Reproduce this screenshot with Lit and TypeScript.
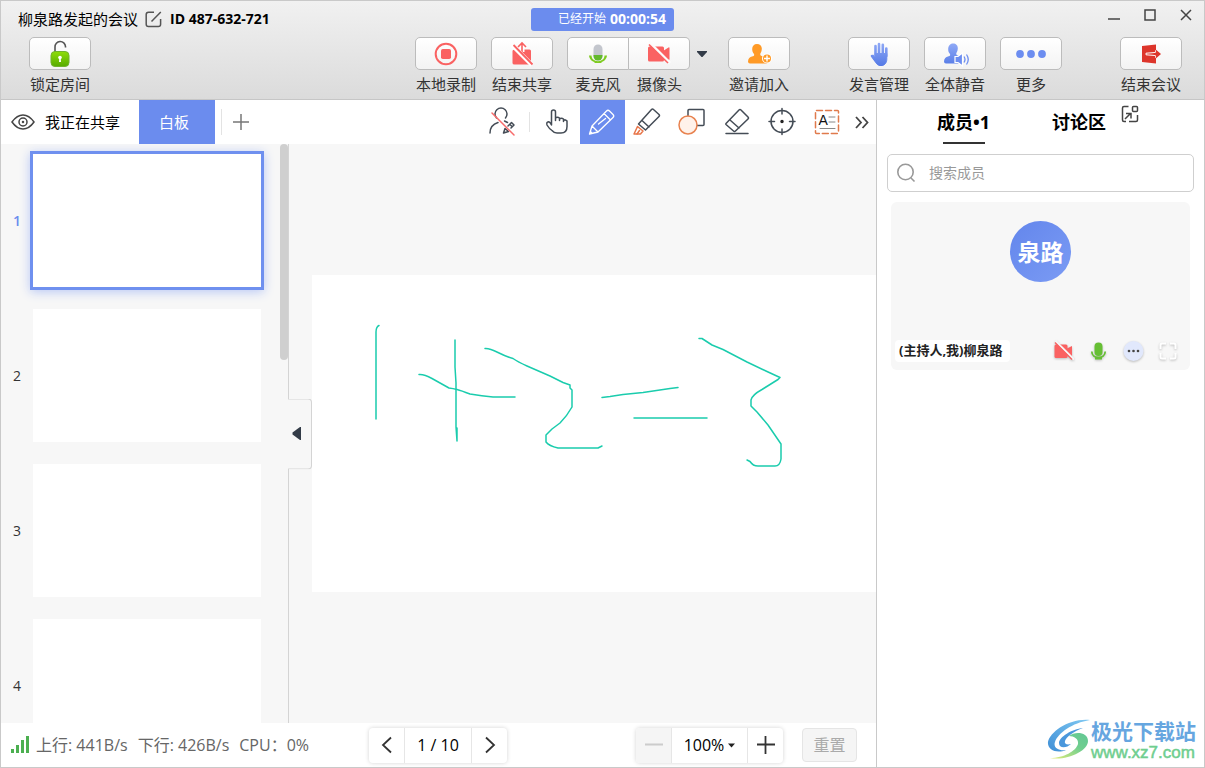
import { LitElement, html, svg, css } from "lit";
import { customElement, state } from "lit/decorators.js";
import { classMap } from "lit/directives/class-map.js";

const icons = {
  edit: html`<svg class="i17" viewBox="0 0 17 17" fill="none" stroke="#555" stroke-width="1.5"><path d="M9 1.2H3.5Q1.2 1.2 1.2 3.5v9.8q0 2.300 2.300 2.300h9.800q2.300 0 2.300-2.300V8M6.500 10.500 15.800 1"/></svg>`,
  lock: html`<svg class="i30" viewBox="0 0 30 30"><defs><linearGradient id="lk" x2="0" y2="1"><stop stop-color="#8fdd08"/><stop offset="1" stop-color="#57ab00"/></linearGradient></defs><path d="M10 13V8a5 5 0 0 1 10.500-.5v1" fill="none" stroke="#555" stroke-width="1.600"/><rect x="6" y="12.500" width="18" height="15" rx="4" fill="url(#lk)" stroke="#71b32e"/><circle cx="15" cy="18.500" r="1.800" fill="#fff"/><path d="M14.300 18h1.400l.3 5h-2z" fill="#fff"/></svg>`,
  record: html`<svg class="i30" viewBox="0 0 30 30"><circle cx="15" cy="15" r="10.300" fill="none" stroke="#fa6262" stroke-width="2"/><rect x="10" y="10" width="10" height="10" rx="1.800" fill="#fa6262"/></svg>`,
  unshare: html`<svg class="i30" viewBox="0 0 30 30"><path d="M7.500 10.500h15Q24 10.500 24 12v12q0 1.500-1.500 1.500h-15Q5.500 25.500 5.500 24V12q0-1.500 2-1.500z" fill="#fa6262"/><path d="M15 13V5" stroke="#fff" stroke-width="5"/><path d="M15 14V4.500M11 8l4-4 4 4" fill="none" stroke="#fa6262" stroke-width="1.600"/><path d="M5 6 25 26" stroke="#fff" stroke-width="4.500"/><path d="M6.500 6 25.500 25.500" stroke="#fa6262" stroke-width="1.800"/></svg>`,
  mic: html`<svg class="i30" viewBox="0 0 30 30"><rect x="10.500" y="5.500" width="9" height="16" rx="4.500" fill="#c3c6cd"/><path d="M10.500 16h9v1a4.500 4.500 0 0 1-9 0z" fill="#63b92d"/><path d="M6 16.500h2.500C8.500 24 21.500 24 21.500 16.500H24c-.5 4-3 5.700-5.500 6.500v1h-7v-1C9 22.200 6.500 20.500 6 16.500z" fill="#7ecb20"/></svg>`,
  camOff: html`<svg class="i30" viewBox="0 0 30 30"><rect x="4" y="7.500" width="16" height="15" rx="1.500" fill="#fa6262"/><path d="M19 12l5.500-3.500q1-.5 1 .7v11q0 1-1 .5L19 18z" fill="#fa6262"/><path d="M5 3 26 24" stroke="#fcfcfc" stroke-width="2.600"/><path d="M5 5.500 24 24" stroke="#fa6262" stroke-width="1.600"/></svg>`,
  invite: html`<svg class="i30" viewBox="0 0 30 30"><path d="M13 5c3 0 5 2 4.800 5-.2 3-1.300 4-1.600 5 0 1.500 1 2 3 2.500l4 2v5H6q-2 0-2-2c0-3 2-4.500 4-5s2.500-1 2-2.500C8.500 13 8.200 12 8.200 10 8.200 7 10 5 13 5z" fill="#ff9a26"/><circle cx="23" cy="19.500" r="5" fill="#fff"/><circle cx="23" cy="19.500" r="4" fill="#ff9a26"/><path d="M20 19.500h6M23 16.500v6" stroke="#fff" stroke-width="1.400"/></svg>`,
  hand: html`<svg class="i30" viewBox="0 0 30 30"><defs><linearGradient id="hd" gradientUnits="userSpaceOnUse" x1="0" y1="4" x2="0" y2="27"><stop stop-color="#8fa9f6"/><stop offset="1" stop-color="#557ae6"/></linearGradient></defs><g fill="url(#hd)" stroke="url(#hd)" stroke-linecap="round" stroke-width="2.600"><path d="M11.500 16V7M15 15V5M18.800 15V5.800M22.300 17V9.500M8 17 11 21" fill="none"/><path d="M11.500 14.500h11.300v6c0 3-2.300 6-4.800 6h-2c-3.500 0-5.500-5-8-10 1.500-1 2.500.5 3.500 1.500z" stroke-width="1"/></g></svg>`,
  muteAll: html`<svg class="i30" viewBox="0 0 30 30"><defs><linearGradient id="mu" x2="0" y2="1"><stop stop-color="#8fa9f6"/><stop offset="1" stop-color="#5b7fe8"/></linearGradient></defs><path d="M13 4.500c3 0 5 2 4.800 5-.2 3-1.300 4-1.600 5 0 1.500 1 2 3 2.500v7.500H6q-2 0-2-2c0-3 2-4.500 4-5s2.500-1 2-2.500c-1.500-1.500-1.800-3-1.800-5 0-3 1.800-5.500 4.800-5.500z" fill="url(#mu)"/><path d="M15 17.500h3l4.500-3.500v13L18 23.500h-3z" fill="#6c8df0" stroke="#fff" stroke-width="1.200"/><path d="M24 17.500q2 3 0 6M26.500 15.500q3.500 5 0 10" fill="none" stroke="#6c8df0" stroke-width="1.300"/></svg>`,
  dots: html`<svg class="i30" viewBox="0 0 30 30"><g fill="#6c8df0"><circle cx="4" cy="15" r="3.900"/><circle cx="15" cy="15" r="3.900"/><circle cx="26" cy="15" r="3.900"/></g></svg>`,
  exit: html`<svg class="i30" viewBox="0 0 30 30"><path d="M6 7 20 5.500v19L6 23z" fill="#dd352b"/><path d="M10 14.200 19.500 13.500V11.500l5 3.500-5 3.500v-2L10 15.800z" fill="#dd352b" stroke="#fff" stroke-width="1"/><path d="M19.800 14v-3.500l5.200 4.500-5.200 4.500V16h-2v-2z" fill="#dd352b"/></svg>`,
  eye: html`<svg class="eye" viewBox="0 0 24 18" fill="none" stroke="#444" stroke-width="1.500"><path d="M1 9Q6 2 12 2t11 7q-5 7-11 7T1 9z"/><circle cx="12" cy="9" r="4"/><circle cx="12" cy="9" r=".5"/></svg>`,
};

const line = (body: unknown, cls = "i30") =>
  html`<svg class=${cls} viewBox="0 0 30 30" fill="none" stroke="#444c56" stroke-width="1.500" stroke-linejoin="round" stroke-linecap="round">${body}</svg>`;

const drawTools = [
  { id: "pointer", label: "鼠标", icon: line(svg`<path d="M9.500 18V5q0-2 2-2t2 2V13.500M13.500 13.500V11q2-1.500 4 0v2.500M17.500 13.500V12q2-1.500 4 0v2.500M21.500 14.500v-1q2-1.500 3.500.5v5.500q0 6.500-6 6.500h-4q-3 0-5-2.500Q7 21.500 5 18q-.8-3 1.500-3.300 1.500 0 3 3.300"/>`) },
  { id: "pen", label: "画笔", icon: line(svg`<g stroke="#fff" stroke-width="1.300"><path d="M5 19 19.500 4q1.500-1.500 3 0l3.500 3.500q1.500 1.500 0 3L11 25l-8.500 2zM5 19l6 6M17 6.500l6.500 6.500M11.500 17l7-5.500M3.500 24.500 5 26.500"/></g>`) },
  { id: "marker", label: "荧光笔", icon: line(svg`<path d="M6.500 17 19.500 2.500q1-1 2 0l5.500 5q1 1 0 2L13.500 23zM10 13.500l7 6.500"/><path d="M5.500 19.500 11 24l-2.500 3H2z" stroke="#e8764a"/><path d="M5 27l2.500-3.500" stroke="#e8764a"/>`) },
  { id: "shape", label: "图形", icon: line(svg`<rect x="11" y="2.500" width="16" height="16" rx="1"/><circle cx="11" cy="18" r="9" fill="#fff2ea" stroke="#e8824f"/>`) },
  { id: "eraser", label: "橡皮", icon: line(svg`<path d="M4 16.500 17 3q1-1 2 0l7 7q1 1 0 2L13.500 24q-1 1-2 0L4 17.500q-.5-.5 0-1zM8 13l9 8M4 26.500h22"/>`) },
  { id: "laser", label: "激光笔", icon: line(svg`<circle cx="15" cy="14.500" r="11"/><path d="M15 1.500v5.500M15 22v5.500M2 14.500h5.500M22.500 14.500H28"/><circle cx="15" cy="14.500" r="1" fill="#222" stroke="#222"/>`) },
  { id: "text", label: "文本", icon: line(svg`<rect x="3.500" y="3.500" width="23" height="23" rx="1" stroke="#e07a4c" stroke-dasharray="6 3"/><text x="6.500" y="18" font-size="14" font-family="Liberation Sans" fill="#111" stroke="none">A</text><path d="M17 10h6M17 15h6M8 21.500h15" stroke="#888" stroke-width="1"/>`) },
];

@customElement("app-root")
export class AppRoot extends LitElement {
  @state() private tool = "pen";
  @state() private page = 1;

  static styles = css`
    :host { display: block; height: 100vh; font-family: "Open Sans", "Noto Sans CJK SC", sans-serif; font-size: 15px; line-height: 20px; color: #000; }
    * { box-sizing: border-box; }
    button { font: inherit; color: inherit; border: 0; padding: 0; margin: 0; background: none; cursor: pointer; }
    svg { display: block; flex: none; }
    .i30 { width: 30px; height: 30px; }
    .i17 { width: 17px; height: 17px; }
    .i20 { width: 20px; height: 20px; }
    .eye { width: 24px; height: 18px; }
    .app { position: relative; height: 100%; display: flex; flex-direction: column; border: 1px solid #c9c9c9; background: #fff; overflow: hidden; }
    .header { flex: none; background: linear-gradient(#f1f1f1, #dbdbdb); border-bottom: 1px solid #c6c6c6; }
    .row { display: grid; grid-template-columns: 1fr auto 1fr; }
    .titlebar { height: 36px; }
    .title { display: flex; align-items: center; gap: 8px; padding-left: 17px; white-space: nowrap; }
    .title button { margin-left: -1px; }
    .id { font-size: 14px; font-weight: 700; }
    .timer { align-self: center; width: 143px; height: 23px; border-radius: 3px; background: #6b8cee; color: #fff; font-size: 12px; display: flex; align-items: center; justify-content: flex-end; gap: 4px; padding-right: 8px; }
    .timer b { font-size: 14px; font-weight: 700; }
    .window { display: flex; justify-content: flex-end; align-items: flex-start; gap: 20px; padding: 6px 10px 0 0; }
    .window svg { width: 16px; height: 16px; }
    .toolbar { height: 62px; }
    .group { display: flex; align-items: flex-start; gap: 14px; }
    .left { padding-left: 28px; }
    .right { justify-content: flex-end; padding-right: 22px; }
    .end { margin-left: 44px; }
    .tool { display: flex; flex-direction: column; align-items: center; gap: 4px; color: #333; white-space: nowrap; }
    .box { width: 62px; height: 33px; display: flex; align-items: center; justify-content: center; border: 1px solid #bcbcbc; border-radius: 5px; background: linear-gradient(#fff, #f3f3f3); }
    .split { display: flex; }
    .split .tool:first-child .box { border-radius: 5px 0 0 5px; }
    .split .tool:nth-child(2) .box { width: 61px; border-radius: 0 5px 5px 0; border-left: 0; }
    .caret { width: 24px; height: 33px; display: flex; align-items: center; justify-content: center; }
    .caret svg { width: 12px; height: 8px; }
    .main { flex: 1; min-height: 0; display: grid; grid-template-columns: minmax(0, 1fr) 328px; }
    .stage { min-height: 0; display: flex; flex-direction: column; }
    .tabs { flex: none; height: 44px; display: flex; align-items: center; }
    .sharing { display: flex; align-items: center; gap: 10px; padding-left: 10px; width: 138px; white-space: nowrap; }
    .tab { width: 76px; height: 44px; background: #6b8cee; color: #fff; padding-right: 6px; }
    .rule { width: 1px; height: 26px; background: #e3e3e3; margin: 0 6px; }
    .tools .rule { height: 20px; margin: 0 5px 0 12px; }
    .add { width: 26px; height: 26px; display: flex; align-items: center; justify-content: center; }
    .tools { margin-left: auto; display: flex; align-items: center; }
    .tools .draw { width: 45px; height: 44px; display: flex; align-items: center; padding-left: 7px; }
    .tools .on { background: #6b8cee; }
    .tools .more { width: 26px; height: 44px; display: flex; align-items: center; padding-left: 1px; }
    .board { flex: 1; min-height: 0; display: grid; grid-template-columns: 288px minmax(0, 1fr); background: #f7f7f7; }
    .thumbs { position: relative; border-right: 1px solid #d4d4d4; overflow: hidden; min-height: 0; padding-top: 10px; display: flex; flex-direction: column; gap: 22px; }
    .thumb { flex: none; display: grid; grid-template-columns: 32px 228px; align-items: center; font-size: 14px; color: #333; height: 133px; }
    .thumb i { font-style: normal; }
    .sheet { height: 133px; background: #fff; }
    .cur { color: #6b8cee; font-weight: 600; }
    .cur .sheet { box-shadow: 0 0 0 3px #6f90ef, 0 2px 10px 3px #b9c8f5; }
    .bar { position: absolute; top: 0; right: 0; width: 8px; height: 216px; border-radius: 4px; background: #cfcfcf; }
    .canvas { position: relative; display: flex; align-items: center; padding-left: 23px; min-width: 0; }
    .slide { width: 100%; background: #fff; }
    .fold { position: absolute; left: -1px; top: 50%; transform: translateY(-50%); width: 24px; height: 71px; border: 1px solid #d4d4d4; border-left: 0; border-radius: 0 4px 4px 0; background: #f7f7f7; display: flex; align-items: center; padding-left: 4px; }
    .fold svg { width: 10px; height: 14px; }
    .footer { flex: none; height: 44px; display: flex; align-items: center; font-size: 16px; }
    .stats { flex: 0 0 368px; display: flex; align-items: center; gap: 10px; padding-left: 9px; color: #666; white-space: nowrap; }
    .stats svg { width: 20px; height: 20px; margin-right: -4px; }
    .pill { display: flex; height: 35px; border-radius: 4px; background: #fff; box-shadow: 0 0 4px #d4d4d4; overflow: hidden; }
    .pill > * { display: flex; align-items: center; justify-content: center; border-left: 1px solid #e6e6e6; width: 36px; }
    .pill > :first-child { border-left: 0; width: 35px; }
    .pill .num { width: 67px; }
    .pill .pct { width: 76px; gap: 4px; }
    .pill .off { background: #f5f5f5; }
    .zoom { margin-left: auto; }
    .reset { width: 55px; height: 34px; margin: 0 19px; border: 1px solid #e5e5e5; border-radius: 4px; background: #f5f5f5; color: #aaa; }
    .side { border-left: 1px solid #c9c9c9; padding: 0 10px; }
    .sidetabs { display: flex; height: 54px; padding-left: 50px; align-items: flex-start; font-size: 18px; font-weight: 700; }
    .sidetabs .sec { height: 44px; width: 115px; text-align: left; font-weight: 700; display: flex; flex-direction: column; justify-content: flex-end; }
    .sidetabs .sec::after { content: ""; width: 42px; height: 2px; margin: 10px 0 0 6px; background: transparent; }
    .sidetabs .active::after { background: #333; }
    .sidetabs .talk { width: 69px; }
    .pop { width: 20px; height: 28px; }
    .search { display: flex; align-items: center; gap: 13px; height: 38px; border: 1px solid #cfcfcf; border-radius: 5px; padding: 0 8px; }
    .search input { flex: 1; min-width: 0; border: 0; outline: 0; padding: 0; background: none; font: inherit; font-size: 14px; }
    .search input::placeholder { color: #999; opacity: 1; }
    .card { height: 168px; margin: 10px 4px; padding: 19px 4px 8px; border-radius: 6px; background: #f7f7f7; display: flex; flex-direction: column; justify-content: space-between; }
    .avatar { align-self: center; width: 61px; height: 61px; border-radius: 50%; background: linear-gradient(135deg, #6386ec, #7b9bf4); color: #fff; font-size: 23px; font-weight: 700; display: flex; align-items: center; justify-content: center; }
    .who { display: flex; align-items: center; justify-content: space-between; padding-right: 7px; }
    .name { background: #fff; border-radius: 4px; height: 22px; line-height: 20px; padding: 0 7px 0 4px; font-size: 13px; font-weight: 700; color: #222; white-space: nowrap; }
    .acts { display: flex; gap: 13px; }
    .acts svg { width: 22px; height: 22px; filter: drop-shadow(0 1px 1px #bbb); }
    .brand { position: absolute; right: 8px; bottom: 5px; display: flex; align-items: center; color: #66a6e0; text-decoration: none; }
    .brand svg { width: 48px; height: 42px; margin-right: -4px; }
    .brand strong { display: block; font-size: 21px; line-height: 26px; }
    .brand span { display: block; font-family: "Liberation Sans", sans-serif; font-size: 17px; line-height: 18px; color: #6fce8f; -webkit-text-stroke: 0.5px #6fce8f; }
  `;

  private big(label: string, icon: unknown, cls = "") {
    return html`<button class="tool ${cls}"><span class="box">${icon}</span><span>${label}</span></button>`;
  }

  private header() {
    return html`<header class="header">
      <div class="row titlebar">
        <div class="title"><span>柳泉路发起的会议</span><button aria-label="编辑">${icons.edit}</button><span class="id">ID 487-632-721</span></div>
        <div class="timer"><span>已经开始</span><b>00:00:54</b></div>
        <div class="window">
          <button aria-label="最小化"><svg viewBox="0 0 16 16" stroke="#444" stroke-width="1.500"><path d="M2 12h12"/></svg></button>
          <button aria-label="最大化"><svg viewBox="0 0 16 16" stroke="#444" stroke-width="1.500" fill="none"><path d="M3 3h10v10H3z"/></svg></button>
          <button aria-label="关闭"><svg viewBox="0 0 16 16" stroke="#444" stroke-width="1.500"><path d="M3 3l10 10M13 3 3 13"/></svg></button>
        </div>
      </div>
      <div class="row toolbar">
        <div class="group left">${this.big("锁定房间", icons.lock)}</div>
        <div class="group">
          ${this.big("本地录制", icons.record)}${this.big("结束共享", icons.unshare)}
          <div class="split">
            ${this.big("麦克风", icons.mic)}${this.big("摄像头", icons.camOff)}
            <button class="caret" aria-label="设备选项"><svg viewBox="0 0 12 8"><path d="M1 1h10v1L6.500 7h-1L1 2z" fill="#333c48"/></svg></button>
          </div>
          ${this.big("邀请加入", icons.invite)}
        </div>
        <div class="group right">
          ${this.big("发言管理", icons.hand)}${this.big("全体静音", icons.muteAll)}${this.big("更多", icons.dots)}${this.big("结束会议", icons.exit, "end")}
        </div>
      </div>
    </header>`;
  }

  private tabs() {
    return html`<nav class="tabs">
      <div class="sharing">${icons.eye}<span>我正在共享</span></div>
      <button class="tab">白板</button><span class="rule"></span>
      <button class="add" aria-label="新建"><svg class="i20" viewBox="0 0 20 20" stroke="#777" stroke-width="1.500"><path d="M2 10h16M10 2v16"/></svg></button>
      <div class="tools">
        <button aria-label="标注权限">${line(svg`<path d="M9.500 11a6 6 0 1 1 9 0M3 26q0-8 8-10.500M17.500 14l3 1.500M16.500 26l1.500-4.500 3.500 3zM21 19l3.500-3.500 2.500 2.500-3 3M23 17.500l2 2"/><path d="M5 6 27 28" stroke="#f76b6b"/>`)}</button>
        <span class="rule"></span>
        ${drawTools.map(
          (t) => html`<button class=${classMap({ draw: true, on: t.id === this.tool })} aria-label=${t.label} @click=${() => (this.tool = t.id)}>${t.icon}</button>`,
        )}
        <button class="more" aria-label="更多工具"><svg class="i20" viewBox="0 0 20 20" fill="none" stroke="#444" stroke-width="1.800"><path d="M5 5l5 5.500L5 16M11.500 5l5 5.500-5 5.500"/></svg></button>
      </div>
    </nav>`;
  }

  private board() {
    return html`<div class="board">
      <div class="thumbs">
        ${[1, 2, 3, 4].map((n) => html`<button class=${classMap({ thumb: true, cur: n === this.page })} @click=${() => (this.page = n)}><i>${n}</i><span class="sheet"></span></button>`)}
        <span class="bar"></span>
      </div>
      <div class="canvas">
        <svg class="slide" viewBox="0 0 564 317" fill="none" stroke="#1accad" stroke-width="1.500" stroke-linejoin="round" stroke-linecap="round">
          <path d="M67 50.500Q64 52 64 57V144"/>
          <path d="M143 65V92L144 108V152L145 166V153"/>
          <path d="M107 99.500Q112 99 120 103.500T137 113Q141 113.500 145 114.500T158 119Q170 121 181 122H203"/>
          <path d="M173 73.500Q177 73 186 77.500T201 83.500Q206 87 215 91L238 101 251 107.500 258 110V113L260 115V132Q255 141 248 148L240 154 234 160V167Q237 171 246 173H286L290 171"/>
          <path d="M290 122.500 298 121.500 311 119.500 331 117.500 358 113.500 366 112.500M322 143H395"/>
          <path d="M387 63.500h3L400 70 411 74.500 435 87 455 96.500 468 102.500 466 104.500 450 114.500Q440 120 439 125V131L445 137 456 150 469 169V184Q468 191 463 191H446Q441 191 438 186.500L435 185"/>
        </svg>
        <button class="fold" aria-label="收起"><svg viewBox="0 0 10 14"><path d="M9 .5v13H8L.5 8V6L8 .5z" fill="#333c48"/></svg></button>
      </div>
    </div>`;
  }

  private footer() {
    const arrow = (d: string) => html`<svg class="i20" viewBox="0 0 20 20" fill="none" stroke="#333" stroke-width="1.800"><path d=${d}/></svg>`;
    return html`<footer class="footer">
      <div class="stats">
        <svg viewBox="0 0 20 20" fill="#4caf50"><path d="M1 14h3v4H1zM6 10h3v8H6zM11 5h3v13h-3zM16 1h3v17h-3z"/></svg>
        <span>上行: 441B/s</span><span>下行: 426B/s</span><span>CPU：0%</span>
      </div>
      <div class="pill">
        <button aria-label="上一页">${arrow("M14 2.500 6 10l8 7.500")}</button><span class="num">${this.page} / 10</span><button aria-label="下一页">${arrow("M6 2.500l8 7.500-8 7.500")}</button>
      </div>
      <div class="pill zoom">
        <button class="off" aria-label="缩小"><svg class="i20" viewBox="0 0 20 20" stroke="#ccc" stroke-width="1.800"><path d="M1 9.500h18"/></svg></button>
        <button class="pct">100%<svg width="7" height="5" viewBox="0 0 7 5"><path d="M0 .5h7L3.500 4.500z" fill="#222"/></svg></button>
        <button aria-label="放大">${arrow("M1 9.500h18M9.500 1v18")}</button>
      </div>
      <button class="reset" disabled>重置</button>
    </footer>`;
  }

  private side() {
    return html`<aside class="side">
      <div class="sidetabs">
        <button class="sec active">成员•1</button><button class="sec talk">讨论区</button>
        <button class="pop" aria-label="弹出"><svg width="18" height="18" viewBox="0 0 18 18" fill="none" stroke="#444" stroke-width="1.500"><path d="M7.500 1.500H3Q1.500 1.500 1.500 3v12q0 1.500 1.500 1.500h2M8 16.500h7q1.500 0 1.500-1.500v-5M4 14l5.500-5.500M5 8.500h5v5"/><rect x="11.500" y="1.500" width="5" height="5" rx="1"/></svg></button>
      </div>
      <label class="search">
        <svg class="i20" viewBox="0 0 20 20" fill="none" stroke="#999" stroke-width="1.600"><circle cx="9.500" cy="9" r="7.700"/><path d="M15 15l3.500 3.500"/></svg>
        <input type="text" placeholder="搜索成员" aria-label="搜索成员" />
      </label>
      <section class="card">
        <div class="avatar">泉路</div>
        <div class="who">
          <span class="name">(主持人,我)柳泉路</span>
          <div class="acts">
            <button aria-label="摄像头"><svg viewBox="0 0 22 22"><rect x="2.500" y="4.500" width="13" height="13.500" rx="1.500" fill="#fa6262"/><path d="M15 8.500 20 6v11L15 14.500z" fill="#fa6262"/><path d="M3.500 1 22 19.500" stroke="#f7f7f7" stroke-width="2"/><path d="M3 2.500 20 19.500" stroke="#fa6262" stroke-width="1.300"/></svg></button>
            <button aria-label="麦克风"><svg viewBox="0 0 22 22"><rect x="7.500" y="2.500" width="8" height="13.500" rx="4" fill="#66bf34"/><path d="M4.800 11.500c0 8 13.400 8 13.400 0" fill="none" stroke="#66bf34" stroke-width="1.800"/><path d="M8 17h7v2.500h-7z" fill="#66bf34"/></svg></button>
            <button aria-label="更多"><svg viewBox="0 0 22 22"><circle cx="11.500" cy="11" r="10" fill="#e1e8fc"/><g fill="#444"><circle cx="7" cy="11" r="1.300"/><circle cx="11.500" cy="11" r="1.300"/><circle cx="16" cy="11" r="1.300"/></g></svg></button>
            <button aria-label="全屏"><svg viewBox="0 0 22 22" fill="none" stroke="#fff" stroke-width="2"><path d="M3.500 9V5q0-1.500 1.500-1.500h4M13 3.500h4q1.500 0 1.500 1.500v4M18.500 13v4q0 1.500-1.500 1.500h-4M9 18.500H5q-1.500 0-1.500-1.500v-4"/></svg></button>
          </div>
        </div>
      </section>
    </aside>`;
  }

  render() {
    return html`<div class="app">
      ${this.header()}
      <main class="main"><div class="stage">${this.tabs()}${this.board()}${this.footer()}</div>${this.side()}</main>
      <a class="brand" href="#">
        <svg viewBox="0 0 48 42"><defs><linearGradient id="b1" x1="0" y1="1" x2="1" y2="0"><stop stop-color="#3f8fd6"/><stop offset="1" stop-color="#7fc8f2"/></linearGradient><linearGradient id="b2" x1="0" y1="1" x2="1" y2="0"><stop stop-color="#e8ee7a"/><stop offset=".6" stop-color="#6fce8f"/><stop offset="1" stop-color="#62c795"/></linearGradient></defs>
          <path d="M43 1C22-1 3 13 1 23c-1 8 9 12 18 8-8 1-13-3-11-8C11 14 25 4 43 1z" fill="url(#b1)"/>
          <path d="M22 17c6-5 19-4 19 5C41 32 20 42 3 39c14 0 26-7 28-14 1-5-4-8-9-8z" fill="url(#b2)"/>
          <path d="M36 9C25 10 12 18 12 24s8 5 12 1c-4 1-7 0-6-3 1-4 9-10 18-13z" fill="#4a97dc"/></svg>
        <div><strong>极光下载站</strong><span>www.xz7.com</span></div>
      </a>
    </div>`;
  }
}
